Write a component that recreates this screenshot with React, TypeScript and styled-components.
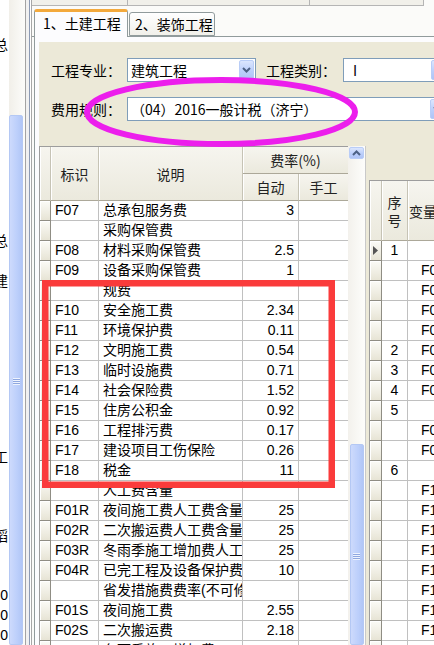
import React from 'react';
import styled, { createGlobalStyle } from 'styled-components';

const Global = createGlobalStyle`
  html, body { margin: 0; padding: 0; background: #fff; }
  body {
    font-family: "Liberation Sans", "Noto Sans CJK SC", sans-serif;
    font-size: 14px;
    color: #000;
  }
  * { box-sizing: border-box; }
`;

const Root = styled.div`
  position: relative;
  width: 434px;
  height: 645px;
  overflow: hidden;
  display: flex;
  background: #fff;
`;

/* ---------- far-left clipped list ---------- */
const LeftList = styled.div`
  width: 9px;
  flex: none;
  display: flex;
  flex-direction: column;
  padding-top: 35px;
  background: #fff;
  overflow: hidden;
`;

const LeftItem = styled.div`
  height: 20px;
  line-height: 20px;
  width: 9px;
  display: flex;
  justify-content: flex-end;
  white-space: nowrap;
  font-size: 14px;
  span { margin-right: 1px; }
`;

const SideScroll = styled.div`
  width: 16px;
  flex: none;
  display: flex;
  flex-direction: column;
  background: linear-gradient(to right, #f1efe9, #fcfcfa);
`;

const SideTrack = styled.div`
  height: 115px;
  flex: none;
`;

const SideThumb = styled.div`
  flex: 1;
  margin-right: 2px;
  border: 1px solid #b4c8f4;
  border-radius: 2px;
  background: linear-gradient(to right, #cddafc, #bccffb 60%, #b1c6f6);
  display: flex;
  flex-direction: column;
  align-items: center;
  padding-top: 262px;
`;

const Grip = styled.div`
  width: 7px;
  height: 7px;
  background: repeating-linear-gradient(to bottom, #eef3fe 0 1px, #8fa8e0 1px 2px);
`;

const Divider = styled.div`
  width: 6px;
  flex: none;
  background: linear-gradient(to right,
    #a3a3a3 0 1px, #f1f1f1 1px 4px, #8c9ab4 4px 5px, #ffffff 5px 6px);
`;

/* ---------- main ---------- */
const Main = styled.div`
  flex: 1;
  min-width: 0;
  display: flex;
  flex-direction: column;
  border-left: 1px solid #a7a7a7;
  background: #fbfbf9;
`;

const TopStrip = styled.div`
  height: 8px;
  flex: none;
  display: flex;
`;

const TopBox = styled.div<{ $w: number }>`
  width: ${p => p.$w}px;
  flex: none;
  height: 6px;
  border-right: 1px solid #b5b5b5;
  border-bottom: 1px solid #b5b5b5;
  background: #f1f0ea;
`;

const TabBar = styled.div`
  height: 29px;
  flex: none;
  display: flex;
  align-items: flex-end;
  padding-left: 2px;
  border-bottom: 1px solid #919b9c;
`;

const Tab = styled.div<{ $active?: boolean; $w: number }>`
  position: relative;
  width: ${p => p.$w}px;
  height: ${p => (p.$active ? 28 : 24)}px;
  margin-bottom: ${p => (p.$active ? -1 : 0)}px;
  margin-left: ${p => (p.$active ? 0 : 1)}px;
  border: 1px solid #919b9c;
  border-bottom: ${p => (p.$active ? 'none' : '1px solid #919b9c')};
  border-top: ${p => (p.$active ? '3px solid #f3a93c' : '1px solid #919b9c')};
  border-radius: 3px 3px 0 0;
  background: ${p => (p.$active ? '#fcfcfe' : 'linear-gradient(#ffffff, #f1f0ea)')};
  font-family: "Noto Sans CJK SC", sans-serif;
  font-size: 14px;
  line-height: 22px;
  padding-left: ${p => (p.$active ? 8 : 5)}px;
  white-space: nowrap;
`;

const TabPage = styled.div`
  flex: 1;
  display: flex;
  flex-direction: column;
  margin-left: 2px;
  border-left: 1px solid #919b9c;
  padding: 5px 0 0 4px;
  background: #fcfcfe;
  min-height: 0;
`;

const Panel = styled.div`
  flex: 1;
  display: flex;
  flex-direction: column;
  background: #ece9d8;
  min-height: 0;
`;

const FormArea = styled.div`
  flex: none;
  display: flex;
  flex-direction: column;
  gap: 15px;
  padding: 16px 0 25px 12px;
`;

const FormRow = styled.div`
  display: flex;
  align-items: center;
  height: 24px;
`;

const Label = styled.div<{ $w: number; $ml?: number }>`
  width: ${p => p.$w}px;
  flex: none;
  margin-left: ${p => p.$ml ?? 0}px;
  font-family: "Noto Sans CJK SC", sans-serif;
  font-size: 14px;
  white-space: nowrap;
`;

const Combo = styled.div<{ $w: number }>`
  width: ${p => p.$w}px;
  flex: none;
  height: 24px;
  border: 1px solid #7f9db9;
  background: #fff;
  display: flex;
  align-items: stretch;
`;

const ComboText = styled.div<{ $pl?: number }>`
  flex: 1;
  padding-left: ${p => p.$pl ?? 3}px;
  font-family: "Noto Sans CJK SC", sans-serif;
  font-size: 14px;
  line-height: 22px;
  white-space: nowrap;
  overflow: hidden;
`;

const DropBtn = styled.div`
  width: 15px;
  flex: none;
  margin: 1px;
  border: 1px solid #b9cdf7;
  border-radius: 2px;
  background: linear-gradient(#dbe6fe, #bccffb 55%, #afc4f6);
  display: flex;
  align-items: center;
  justify-content: center;
`;

const Chevron = ({ up }: { up?: boolean }) => (
  <svg width="9" height="6" viewBox="0 0 9 6">
    <path
      d={up ? 'M1 5 L4.5 1.5 L8 5' : 'M1 1 L4.5 4.5 L8 1'}
      stroke="#4d6185"
      strokeWidth="2"
      fill="none"
    />
  </svg>
);

/* ---------- grids ---------- */
const GridArea = styled.div`
  flex: 1;
  display: flex;
  align-items: stretch;
  min-height: 0;
`;

const LeftGrid = styled.div`
  width: 309px;
  flex: none;
  display: grid;
  grid-template-columns: 11px 48px 144px 56px 50px;
  grid-template-rows: 27px 27px;
  grid-auto-rows: 20px;
  align-content: start;
  border-top: 1px solid #9d9d9d;
  border-left: 1px solid #9d9d9d;
  background: #fff;
`;

const HeadCell = styled.div<{ $row?: string; $col?: string; $left?: boolean }>`
  grid-row: ${p => p.$row || 'auto'};
  grid-column: ${p => p.$col || 'auto'};
  background: linear-gradient(#f6f5ef, #ebe9dd);
  border-right: 1px solid #c6c3b5;
  border-bottom: 1px solid #aca899;
  box-shadow: inset 1px 0 #fff;
  display: flex;
  align-items: center;
  justify-content: ${p => (p.$left ? 'flex-start' : 'center')};
  padding-left: ${p => (p.$left ? 1 : 0)}px;
  font-family: "Noto Sans CJK SC", sans-serif;
  font-size: 14px;
  color: #222;
  white-space: nowrap;
  overflow: hidden;
`;

const RowHead = styled.div`
  background: linear-gradient(#fbfbf7, #e7e4d5);
  border-right: 1px solid #8f8d84;
  border-bottom: 1px solid #8f8d84;
  box-shadow: inset 1px 1px #fff;
  display: flex;
  align-items: center;
  justify-content: center;
`;

const Cell = styled.div<{ $align?: 'left' | 'right' | 'center'; $pl?: number }>`
  border-right: 1px solid #c0c0c0;
  border-bottom: 1px solid #c0c0c0;
  padding: 0 4px 0 ${p => (p.$pl ?? 4)}px;
  text-align: ${p => p.$align || 'left'};
  line-height: 19px;
  white-space: nowrap;
  overflow: hidden;
  font-size: 14px;
`;

const VScroll = styled.div`
  width: 18px;
  flex: none;
  display: flex;
  flex-direction: column;
  align-items: center;
  background: linear-gradient(to right, #f3f1ec, #fdfdfb);
  border-right: 1px solid #c9c9c9;
`;

const UpBtn = styled.div`
  width: 15px;
  height: 16px;
  margin-top: 1px;
  border: 1px solid #b9cdf7;
  border-radius: 2px;
  background: linear-gradient(#dbe6fe, #bccffb 55%, #afc4f6);
  display: flex;
  align-items: center;
  justify-content: center;
`;

const VThumb = styled.div`
  width: 14px;
  height: 240px;
  margin-top: 285px;
  border: 1px solid #b4c8f4;
  border-radius: 2px;
  background: linear-gradient(to right, #cddafc, #bccffb 60%, #b1c6f6);
  display: flex;
  flex-direction: column;
  align-items: center;
  padding-top: 108px;
`;

const RightPane = styled.div`
  flex: 1;
  min-width: 0;
  background: #ece9d8;
  padding: 34px 0 0 3px;
  display: flex;
  flex-direction: column;
`;

const RightGrid = styled.div`
  display: grid;
  grid-template-columns: 12px 26px 80px;
  grid-template-rows: 60px;
  grid-auto-rows: 20px;
  align-content: start;
  border-top: 1px solid #9d9d9d;
  border-left: 1px solid #9d9d9d;
  background: #fff;
  width: 120px;
`;

const Stack = styled.div`
  display: flex;
  flex-direction: column;
  align-items: center;
  line-height: 18px;
`;

const Marker = () => (
  <svg width="5" height="9" viewBox="0 0 5 9">
    <path d="M0 0 L5 4.5 L0 9 Z" fill="#555" />
  </svg>
);

const Overlay = styled.svg`
  position: absolute;
  left: 0;
  top: 0;
  pointer-events: none;
`;

type Row = [string, string, string];
const leftRows: Row[] = [
  ['F07', '总承包服务费', '3'],
  ['', '采购保管费', ''],
  ['F08', '材料采购保管费', '2.5'],
  ['F09', '设备采购保管费', '1'],
  ['', '规费', ''],
  ['F10', '安全施工费', '2.34'],
  ['F11', '环境保护费', '0.11'],
  ['F12', '文明施工费', '0.54'],
  ['F13', '临时设施费', '0.71'],
  ['F14', '社会保险费', '1.52'],
  ['F15', '住房公积金', '0.92'],
  ['F16', '工程排污费', '0.17'],
  ['F17', '建设项目工伤保险', '0.26'],
  ['F18', '税金', '11'],
  ['', '人工费含量', ''],
  ['F01R', '夜间施工费人工费含量', '25'],
  ['F02R', '二次搬运费人工费含量', '25'],
  ['F03R', '冬雨季施工增加费人工费含量', '25'],
  ['F04R', '已完工程及设备保护费', '10'],
  ['', '省发措施费费率(不可修改)', ''],
  ['F01S', '夜间施工费', '2.55'],
  ['F02S', '二次搬运费', '2.18'],
  ['F03S', '冬雨季施工增加费', '2.9'],
];

const rightRows: [string, string][] = [
  ['1', ''], ['', 'F0'], ['', 'F0'], ['', 'F0'], ['', 'F0'],
  ['2', 'F0'], ['3', 'F0'], ['4', 'F0'], ['5', ''], ['', 'F0'],
  ['', 'F0'], ['6', ''], ['', 'F1'], ['', 'F1'], ['', 'F1'],
  ['', 'F1'], ['', 'F1'], ['', 'F1'], ['', 'F1'], ['', 'F1'], ['', 'F1'],
];

const leftItems: Record<number, string> = {
  0: '总', 10: '总', 12: '建', 21: '工', 25: '稻', 28: '0', 29: '0', 30: '0',
};

export default function App() {
  const listRows = Array.from({ length: 31 }, (_, i) => leftItems[i] || '');
  return (
    <Root>
      <Global />
      <LeftList>
        {listRows.map((t, i) => (
          <LeftItem key={i}><span>{t}</span></LeftItem>
        ))}
      </LeftList>
      <SideScroll>
        <SideTrack />
        <SideThumb><Grip /></SideThumb>
      </SideScroll>
      <Divider />
      <Main>
        <TopStrip>
          <TopBox $w={96} />
          <TopBox $w={182} />
          <TopBox $w={114} />
        </TopStrip>
        <TabBar>
          <Tab $active $w={94}>1、土建工程</Tab>
          <Tab $w={86}>2、装饰工程</Tab>
        </TabBar>
        <TabPage>
          <Panel>
            <FormArea>
              <FormRow>
                <Label $w={76}>工程专业：</Label>
                <Combo $w={129}>
                  <ComboText>建筑工程</ComboText>
                  <DropBtn><Chevron /></DropBtn>
                </Combo>
                <Label $w={77} $ml={10}>工程类别：</Label>
                <Combo $w={105}>
                  <ComboText $pl={9}>I</ComboText>
                  <DropBtn><Chevron /></DropBtn>
                </Combo>
              </FormRow>
              <FormRow>
                <Label $w={76}>费用规则：</Label>
                <Combo $w={320}>
                  <ComboText>（04）2016一般计税（济宁）</ComboText>
                  <DropBtn><Chevron /></DropBtn>
                </Combo>
              </FormRow>
            </FormArea>
            <GridArea>
              <LeftGrid>
                <HeadCell $row="1 / span 2" $col="1" />
                <HeadCell $row="1 / span 2" $col="2">标识</HeadCell>
                <HeadCell $row="1 / span 2" $col="3">说明</HeadCell>
                <HeadCell $row="1" $col="4 / span 2">费率(%)</HeadCell>
                <HeadCell $row="2" $col="4">自动</HeadCell>
                <HeadCell $row="2" $col="5">手工</HeadCell>
                {leftRows.map((r, i) => (
                  <React.Fragment key={i}>
                    <RowHead />
                    <Cell>{r[0]}</Cell>
                    <Cell>{r[1]}</Cell>
                    <Cell $align="right">{r[2]}</Cell>
                    <Cell />
                  </React.Fragment>
                ))}
              </LeftGrid>
              <VScroll>
                <UpBtn><Chevron up /></UpBtn>
                <VThumb><Grip /></VThumb>
              </VScroll>
              <RightPane>
                <RightGrid>
                  <HeadCell />
                  <HeadCell><Stack><span>序</span><span>号</span></Stack></HeadCell>
                  <HeadCell $left>变量</HeadCell>
                  {rightRows.map((r, i) => (
                    <React.Fragment key={i}>
                      <RowHead>{i === 0 ? <Marker /> : null}</RowHead>
                      <Cell $align="center" $pl={4}>{r[0]}</Cell>
                      <Cell $pl={13}>{r[1]}</Cell>
                    </React.Fragment>
                  ))}
                </RightGrid>
              </RightPane>
            </GridArea>
          </Panel>
        </TabPage>
      </Main>
      <Overlay width="434" height="645" viewBox="0 0 434 645">
        <ellipse cx="221" cy="112" rx="134" ry="32" fill="none" stroke="#ec1eec" strokeWidth="6" />
        <rect x="45.25" y="283.25" width="286.5" height="201.5" fill="none" stroke="#fa3b3b" strokeWidth="6.5" />
      </Overlay>
    </Root>
  );
}
